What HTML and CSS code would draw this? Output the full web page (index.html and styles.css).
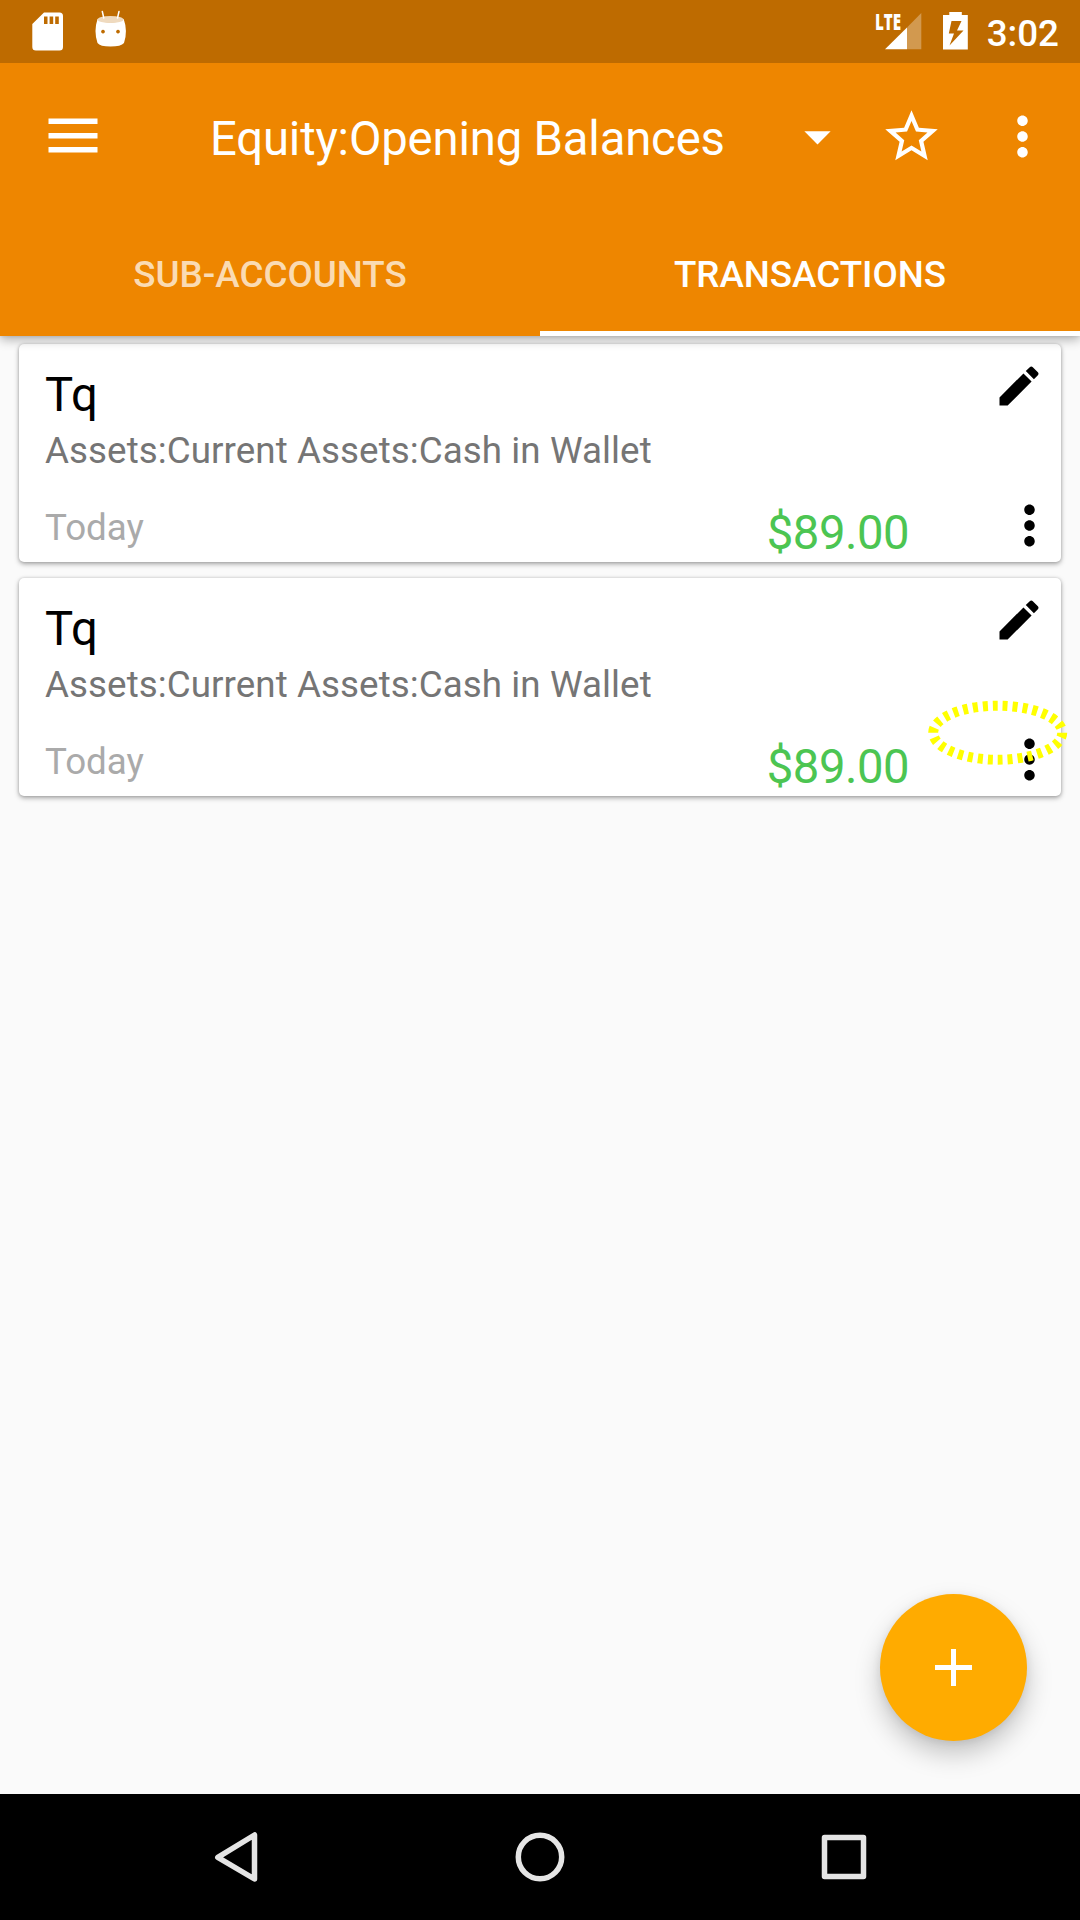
FILE: index.html
```html
<!DOCTYPE html>
<html lang="en">
<head>
<meta charset="utf-8">
<title>Equity:Opening Balances</title>
<link rel="stylesheet" href="styles.css">
</head>
<body>
<div class="screen">
  <header class="header">
    <div class="status">
      <svg class="status-left" width="140" height="63" viewBox="0 0 140 63">
        <path fill="#fff" fill-rule="evenodd" d="M44 12.500H59.500Q63 12.500 63 16V47Q63 50.500 59.500 50.500H36Q32.300 50.500 32.300 47V24ZM44 16.500V24H47.500V16.500ZM49.600 16.500V24H53.200V16.500ZM55.200 16.500V24H58.800V16.500Z"/>
        <path fill="#fff" fill-rule="evenodd" d="M97.500 19Q110.500 26 123.700 19Q128 31 124 43Q121 46.500 110.500 46.500Q100 46.500 97.500 43Q93.500 31 97.500 19ZM103 29.700a1.900 1.900 0 1 0 .01 0ZM118 29.700a1.900 1.900 0 1 0 .01 0Z"/>
        <ellipse cx="110.500" cy="19.500" rx="13" ry="3.600" fill="#efdabf"/>
        <path d="M102.300 11.500l1.500 6.500M119 11.500l-1.500 6.500" stroke="#fff" stroke-width="1.500" stroke-linecap="round"/>
      </svg>
      <div class="status-right">
        <span class="lte">LTE</span>
        <svg class="signal" width="37" height="37" viewBox="0 0 37 37">
          <path fill="#d2994f" d="M22 14.500L36.300 0V36.300H22Z"/>
          <path fill="#fff" d="M0 36.300L22 14.500V36.300Z"/>
        </svg>
        <svg class="battery" width="25" height="38" viewBox="0 0 25 38">
          <path fill="#fff" fill-rule="evenodd" d="M6.300 0H18.800V3H24.800V37.500H0V3H6.300ZM8.500 9L5.800 21.500H11L6.500 33.500L20.500 18.500H14L18.500 9Z"/>
        </svg>
        <span class="clock">3:02</span>
      </div>
    </div>
    <div class="toolbar">
      <svg class="menu" width="50" height="36" viewBox="0 0 50 36"><path fill="#fff" d="M.5.500h49v5.500H.5zM.5 15h49v5.500H.5zM.5 29h49v5.500H.5z"/></svg>
      <h1 class="title">Equity:Opening Balances</h1>
      <svg class="icon caret" viewBox="0 0 24 24"><path d="M7 10l5 5 5-5z"/></svg>
      <svg class="icon star" viewBox="0 0 24 24"><path d="M22 9.240l-7.190-.62L12 2 9.190 8.630 2 9.240l5.460 4.730L5.820 21 12 17.270 18.180 21l-1.630-7.030L22 9.240zM12 15.400l-3.760 2.270 1-4.280-3.320-2.880 4.380-.38L12 6.100l1.710 4.040 4.380.38-3.320 2.880 1 4.280L12 15.400z"/></svg>
      <svg class="icon" viewBox="0 0 24 24"><path d="M12 8c1.100 0 2-.9 2-2s-.9-2-2-2-2 .9-2 2 .9 2 2 2zm0 2c-1.100 0-2 .9-2 2s.9 2 2 2 2-.9 2-2-.9-2-2-2zm0 6c-1.100 0-2 .9-2 2s.9 2 2 2 2-.9 2-2-.9-2-2-2z"/></svg>
    </div>
    <nav class="tabs">
      <div class="tab"><span>SUB-ACCOUNTS</span></div>
      <div class="tab active"><span>TRANSACTIONS</span></div>
    </nav>
  </header>
  <main class="content">
    <article class="card">
      <div class="row top">
        <h2 class="name">Tq</h2>
        <svg class="edit" viewBox="0 0 24 24"><path d="M3 17.250V21h3.750L17.810 9.940l-3.750-3.750L3 17.250zM20.710 7.040c.39-.39.39-1.020 0-1.410l-2.340-2.340c-.39-.39-1.020-.39-1.410 0l-1.830 1.830 3.750 3.750 1.830-1.830z"/></svg>
      </div>
      <p class="account">Assets:Current Assets:Cash in Wallet</p>
      <div class="row bottom">
        <span class="date">Today</span>
        <span class="amount">$89.00</span>
        <svg class="icon more" viewBox="0 0 24 24"><path d="M12 8c1.100 0 2-.9 2-2s-.9-2-2-2-2 .9-2 2 .9 2 2 2zm0 2c-1.100 0-2 .9-2 2s.9 2 2 2 2-.9 2-2-.9-2-2-2zm0 6c-1.100 0-2 .9-2 2s.9 2 2 2 2-.9 2-2-.9-2-2-2z"/></svg>
      </div>
    </article>
    <article class="card">
      <div class="row top">
        <h2 class="name">Tq</h2>
        <svg class="edit" viewBox="0 0 24 24"><path d="M3 17.250V21h3.750L17.810 9.940l-3.750-3.750L3 17.250zM20.710 7.040c.39-.39.39-1.020 0-1.410l-2.340-2.340c-.39-.39-1.020-.39-1.410 0l-1.830 1.830 3.750 3.750 1.830-1.830z"/></svg>
      </div>
      <p class="account">Assets:Current Assets:Cash in Wallet</p>
      <div class="row bottom">
        <span class="date">Today</span>
        <span class="amount">$89.00</span>
        <svg class="icon more" viewBox="0 0 24 24"><path d="M12 8c1.100 0 2-.9 2-2s-.9-2-2-2-2 .9-2 2 .9 2 2 2zm0 2c-1.100 0-2 .9-2 2s.9 2 2 2 2-.9 2-2-.9-2-2-2zm0 6c-1.100 0-2 .9-2 2s.9 2 2 2 2-.9 2-2-.9-2-2-2z"/></svg>
      </div>
    </article>
    <svg class="highlight" width="140" height="66" viewBox="0 0 140 66">
      <ellipse cx="69.700" cy="32.700" rx="64.500" ry="27" pathLength="300" fill="none" stroke="#ff0" stroke-width="10" stroke-dasharray="5 5"/>
    </svg>
    <button class="fab" aria-label="Add transaction">
      <svg width="37" height="37" viewBox="0 0 37 37"><path fill="#fff" d="M16 0h5v16h16v5H21v16h-5V21H0v-5h16z"/></svg>
    </button>
  </main>
  <footer class="navbar">
    <svg width="1080" height="126" viewBox="0 0 1080 126" fill="none" stroke="#e5e5e5" stroke-width="5.500" stroke-linejoin="round">
      <path d="M254.500 41V85L217.800 63.300Z"/>
      <circle cx="540" cy="63" r="21.700"/>
      <rect x="824.500" y="43.500" width="39" height="39"/>
    </svg>
  </footer>
</div>
</body>
</html>
```
FILE: styles.css
```css
* { box-sizing: border-box; margin: 0; padding: 0; }

body {
  width: 1080px;
  height: 1920px;
  overflow: hidden;
  font-family: Roboto, "Liberation Sans", sans-serif;
}

svg { display: block; flex: none; }

.screen {
  width: 1080px;
  height: 1920px;
  display: flex;
  flex-direction: column;
  background: #fafafa;
}

.header {
  position: relative;
  z-index: 1;
  height: 336px;
  background: #ee8600;
  box-shadow: 0 4px 10px rgba(0, 0, 0, .28), 0 0 4px rgba(0, 0, 0, .12);
}

.status {
  height: 63px;
  display: flex;
  justify-content: space-between;
  background: #be6b00;
  color: #fff;
}

.status-right {
  display: flex;
  padding-right: 21px;
}

.lte {
  width: 10px;
  margin-top: 10px;
  font: 800 22px/22px "Open Sans", sans-serif;
  transform: scaleX(.69);
  transform-origin: 0 0;
}

.signal { margin-top: 13px; }

.battery { margin: 12px 19px 0 21px; }

.clock {
  font-size: 36.750px;
  font-weight: 500;
  line-height: 67px;
}

.toolbar {
  height: 147px;
  display: flex;
  align-items: center;
  padding-left: 48px;
  padding-right: 26px;
}

.menu { margin-top: -1px; }

.title {
  flex: 1;
  padding-left: 112px;
  color: #fff;
  font-size: 47.250px;
  font-weight: 400;
  line-height: 56px;
  letter-spacing: -.17px;
  padding-top: 4px;
  white-space: nowrap;
}

.icon {
  width: 63px;
  height: 63px;
  fill: #fff;
}

.caret { margin-right: 31px; }

.star { margin: 0 48px 1px 0; }

.tabs {
  height: 126px;
  display: flex;
}

.tab {
  flex: 1;
  display: flex;
  align-items: center;
  justify-content: center;
  padding-top: 8px;
  color: #fadbb3;
  font-size: 36.750px;
  font-weight: 500;
  border-bottom: 5px solid transparent;
}

.tab.active {
  color: #fff;
  border-color: #fff;
}

.content {
  position: relative;
  flex: 1;
  padding: 8px 19px;
  display: flex;
  flex-direction: column;
  gap: 16px;
}

.card {
  height: 218px;
  padding: 16px 0 0 26px;
  display: flex;
  flex-direction: column;
  border-radius: 5px;
  background: #fff;
  box-shadow: 0 2px 5px rgba(0, 0, 0, .34), 0 0 3px rgba(0, 0, 0, .15);
}

.row { display: flex; }

.top {
  height: 65px;
  justify-content: space-between;
  padding-right: 16px;
}

.name {
  font-size: 47.250px;
  font-weight: 400;
  line-height: 70px;
}

.edit {
  width: 52px;
  height: 52px;
}

.account {
  height: 50px;
  color: #757575;
  font-size: 36.750px;
  line-height: 52px;
  letter-spacing: .07px;
}

.bottom {
  height: 82px;
  padding-top: 19px;
}

.date {
  flex: 1;
  color: #aaa;
  font-size: 36.750px;
  line-height: 68px;
}

.amount {
  margin-right: 89px;
  color: #4cc552;
  font-size: 47.250px;
  line-height: 78px;
  letter-spacing: -.5px;
}

.more { fill: #000; }

.highlight {
  position: absolute;
  left: 928px;
  top: 364px;
}

.fab {
  position: absolute;
  left: 880px;
  top: 1258px;
  width: 147px;
  height: 147px;
  display: grid;
  place-items: center;
  border: 0;
  border-radius: 50%;
  background: #ffab00;
  box-shadow: 0 13px 26px rgba(0, 0, 0, .22), 0 2px 8px rgba(0, 0, 0, .08);
}

.navbar {
  height: 126px;
  background: #000;
}
```
